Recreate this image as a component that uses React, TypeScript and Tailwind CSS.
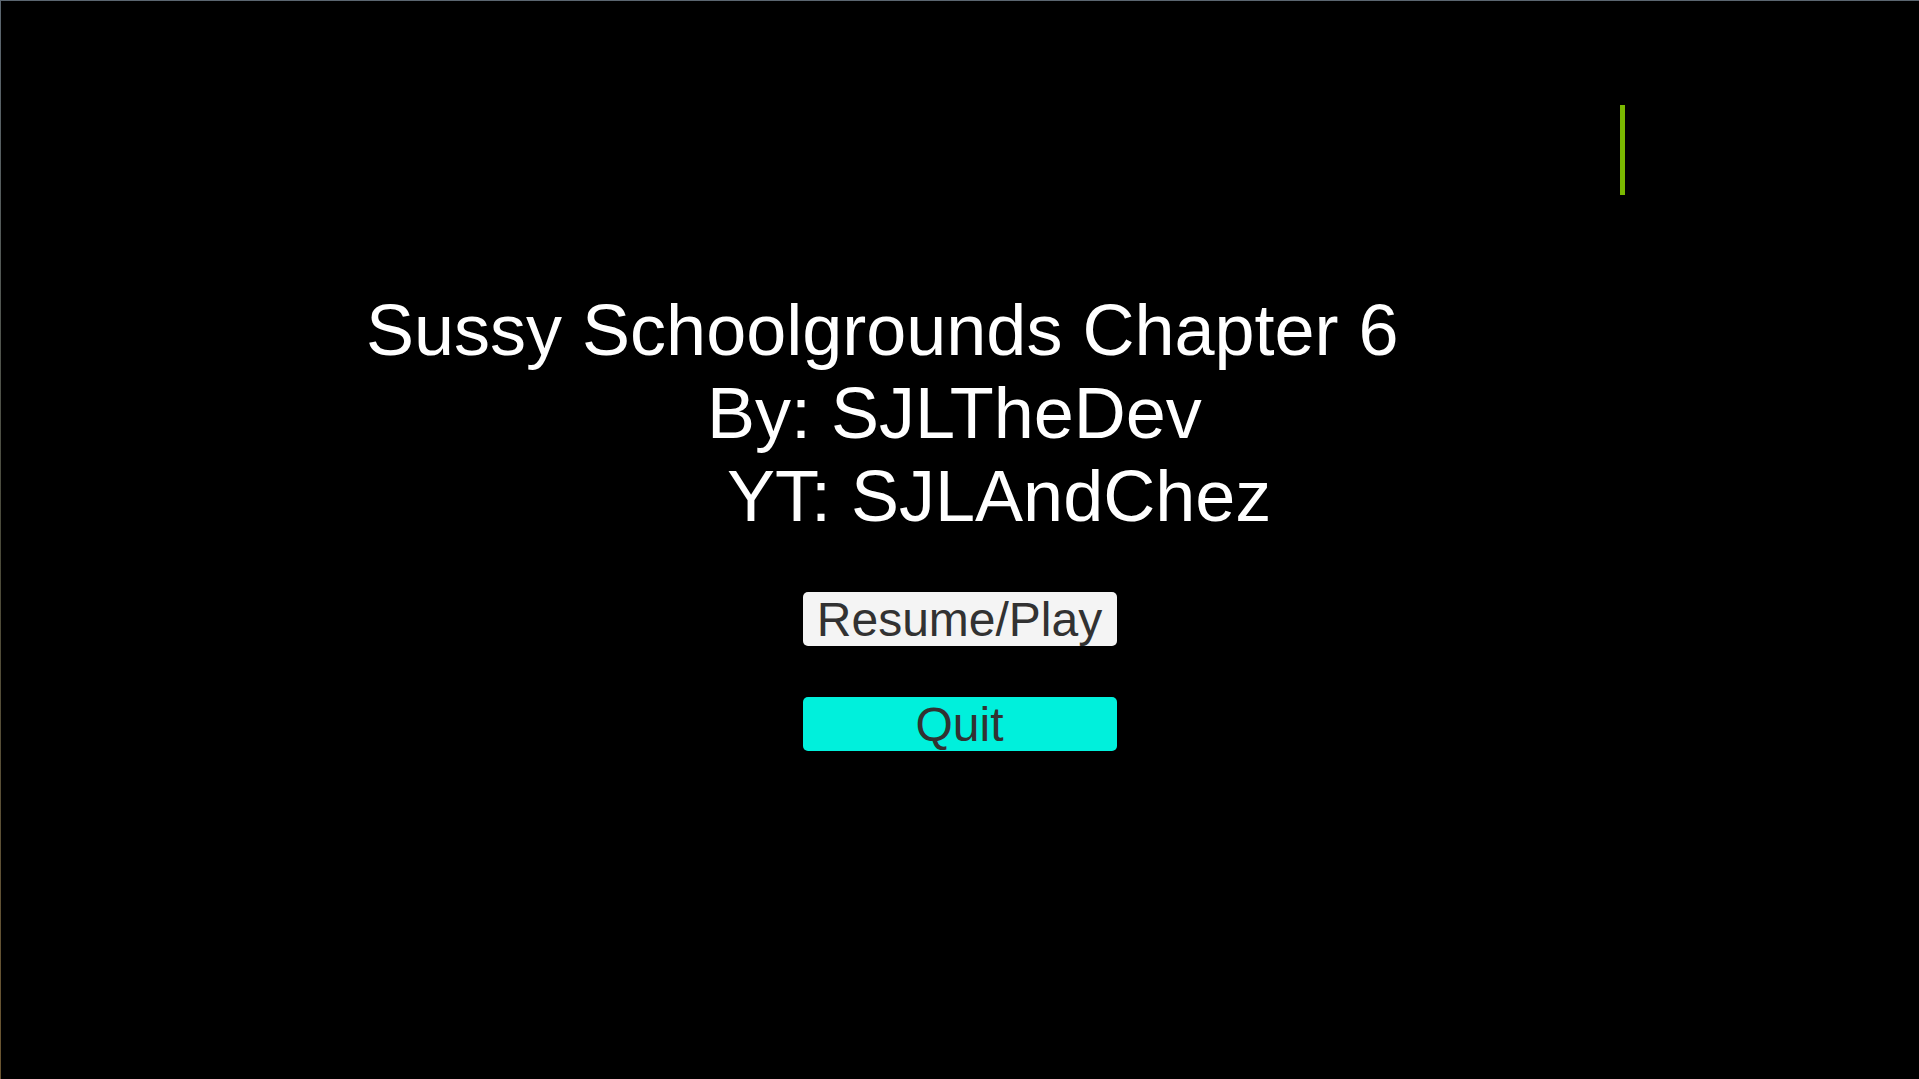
import React from "react"

const font = { fontFamily: '"Liberation Sans", Arial, sans-serif' }

const lines = [
  { text: "Sussy Schoolgrounds Chapter 6", indent: "ml-[365px]" },
  { text: "By: SJLTheDev", indent: "ml-[706px]" },
  { text: "YT: SJLAndChez", indent: "ml-[726px]" },
]

export default function App() {
  return (
    <div className="flex h-[1079px] w-full flex-col bg-black" style={font}>
      <div className="h-px w-full shrink-0 bg-[#5b6670]" />
      <div className="flex flex-1">
        <div className="w-px shrink-0 bg-gradient-to-b from-[#5b6670] via-[#4a4a3a] to-[#6b5530]" />
        <div className="flex flex-1 flex-col">
          {/* green marker */}
          <div className="ml-[1619px] mt-[104px] h-[90px] w-[5px] bg-[#7ab800]" />

          <div className="mt-[94px] flex flex-col text-[72px] leading-[83px] text-white">
            {lines.map((l) => (
              <div key={l.text} className={`${l.indent} whitespace-nowrap`}>
                {l.text}
              </div>
            ))}
          </div>

          <div className="mt-[54px] flex flex-col items-center gap-[51px] pr-px">
            <button className="flex h-[54px] w-[314px] items-center justify-center rounded-[5px] bg-[#f4f4f4] pt-[2px] text-[48px] leading-none text-[#323232]">
              Resume/Play
            </button>
            <button className="flex h-[54px] w-[314px] items-center justify-center rounded-[5px] bg-[#00f0dc] pt-[2px] text-[48px] leading-none text-[#323232]">
              Quit
            </button>
          </div>
        </div>
      </div>
    </div>
  )
}
